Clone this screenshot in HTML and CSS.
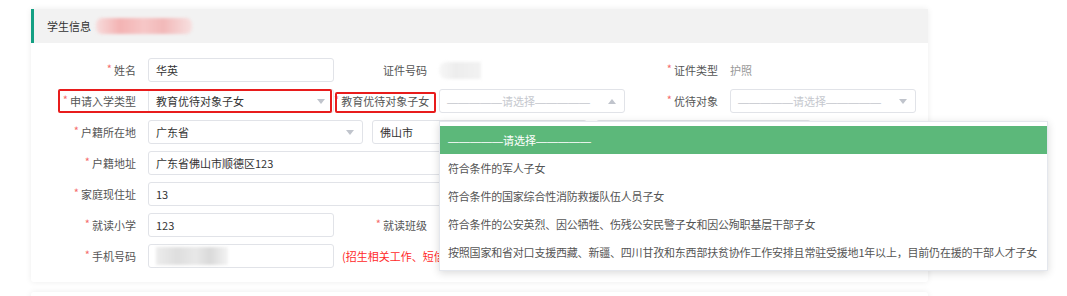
FILE: index.html
```html
<!DOCTYPE html>
<html lang="zh-CN">

<head>
  <meta charset="UTF-8" />
  <meta name="viewport" content="width=device-width, initial-scale=1" />
  <title>学生信息</title>
  <link rel="stylesheet" href="styles.css">
</head>

<body>

  <section class="card">
    <div class="card-head">学生信息<span class="mask mask-name"></span></div>

    <div class="form">
      <!-- 第一行 -->
      <div class="field">
        <label class="req">姓名</label>
        <div class="input">华英</div>
      </div>
      <div class="field">
        <label>证件号码</label>
        <div class="text"><span class="mask mask-id"></span></div>
      </div>
      <div class="field">
        <label class="req">证件类型</label>
        <div class="text muted">护照</div>
      </div>

      <!-- 第二行 -->
      <div class="field marked-field">
        <label class="req">申请入学类型</label>
        <div class="select">教育优待对象子女<i class="caret"></i></div>
      </div>
      <div class="field">
        <label class="req marked-label">教育优待对象子女</label>
        <div class="select placeholder">
          <span class="ph">—————请选择—————</span><i class="caret up"></i>
          <ul class="dropdown">
            <li class="selected"><span class="ph">—————请选择—————</span></li>
            <li>符合条件的军人子女</li>
            <li>符合条件的国家综合性消防救援队伍人员子女</li>
            <li>符合条件的公安英烈、因公牺牲、伤残公安民警子女和因公殉职基层干部子女</li>
            <li>按照国家和省对口支援西藏、新疆、四川甘孜和东西部扶贫协作工作安排且常驻受援地1年以上，目前仍在援的干部人才子女</li>
          </ul>
        </div>
      </div>
      <div class="field">
        <label class="req">优待对象</label>
        <div class="select placeholder"><span class="ph">—————请选择—————</span><i class="caret"></i></div>
      </div>

      <!-- 第三行 -->
      <div class="field wide">
        <label class="req">户籍所在地</label>
        <div class="region">
          <div class="select">广东省<i class="caret"></i></div>
          <div class="select">佛山市<i class="caret"></i></div>
          <div class="select"><i class="caret"></i></div>
        </div>
      </div>

      <div class="field wide">
        <label class="req">户籍地址</label>
        <div class="input long">广东省佛山市顺德区123</div>
      </div>

      <div class="field wide">
        <label class="req">家庭现住址</label>
        <div class="input long">13</div>
      </div>

      <div class="field">
        <label class="req">就读小学</label>
        <div class="input">123</div>
      </div>
      <div class="field">
        <label class="req">就读班级</label>
        <div class="input"></div>
      </div>
      <div class="field"></div>

      <div class="field wide">
        <label class="req">手机号码</label>
        <div class="input"><span class="mask mask-phone"></span></div>
        <span class="hint">(招生相关工作、短信</span>
      </div>
    </div>
  </section>

  <section class="card card-next"></section>

</body>

</html>
```

FILE: styles.css
```css
html,
body {
  margin: 0;
  padding: 0;
  background: #ffffff;
  font-family: "Noto Sans CJK SC", "Liberation Sans", sans-serif;
  font-size: 11px;
  color: #333;
  height: 100%;
  overflow: hidden;
}

.card {
  width: 897px;
  margin: 9px 0 0 31px;
  background: #fff;
  border-radius: 3px;
  box-shadow: 0 0 6px rgba(0, 0, 0, 0.08);
}

.card-next {
  height: 60px;
  margin-top: 10px;
}

.card-head {
  height: 34px;
  display: flex;
  align-items: center;
  background: #f2f2f2;
  border-left: 3px solid #14a083;
  padding-left: 13px;
  color: #333;
}

.mask {
  display: inline-block;
  filter: blur(1.5px);
}

.mask-name {
  width: 96px;
  height: 16px;
  margin-left: 5px;
  border-radius: 6px;
  background: linear-gradient(90deg, #f7dcdc 0%, #f3b3b3 25%, #f6c7c7 50%, #f2b9b9 70%, #f7e0e0 100%);
}

.mask-id {
  width: 42px;
  height: 17px;
  border-radius: 8px 0 0 8px;
  background: linear-gradient(90deg, #f7f7f7, #ededed 40%, #f2f2f2);
}

.mask-phone {
  width: 72px;
  height: 18px;
  margin-top: 2px;
  background: linear-gradient(90deg, #ececec 0%, #dedede 30%, #e8e8e8 55%, #d9d9d9 75%, #f4f4f4 100%);
}

.form {
  display: grid;
  grid-template-columns: repeat(3, 291px);
  row-gap: 7px;
  padding: 15px 0 14px 12px;
}

.field {
  display: flex;
  align-items: center;
  height: 24px;
  position: relative;
}

.field.wide {
  grid-column: 1 / 4;
}

.field label {
  width: 105px;
  flex: none;
  box-sizing: border-box;
  padding-right: 12px;
  text-align: right;
  color: #555;
  white-space: nowrap;
}

.field label.req::before {
  content: "*";
  color: #f56c6c;
  margin-right: 2px;
  position: relative;
  top: -2px;
}

.input,
.select {
  width: 186px;
  height: 24px;
  box-sizing: border-box;
  border: 1px solid #e1e3e8;
  border-radius: 3px;
  padding: 0 7px;
  line-height: 22px;
  color: #333;
  background: #fff;
  position: relative;
  white-space: nowrap;
}

.input.long {
  width: 664px;
}

.text {
  display: flex;
  align-items: center;
  height: 24px;
}

.muted {
  color: #999;
}

.region {
  display: flex;
  gap: 9px;
}

.region .select {
  width: 215px;
}

.caret {
  position: absolute;
  right: 8px;
  top: 9px;
  width: 0;
  height: 0;
  border-left: 4.5px solid transparent;
  border-right: 4.5px solid transparent;
  border-top: 5px solid #c0c4cc;
}

.caret.up {
  border-top: none;
  border-bottom: 5px solid #c0c4cc;
}

.ph {
  font-family: "Liberation Sans", "Noto Sans CJK SC", sans-serif;
  color: #c5c8ce;
}

.hint {
  margin-left: 8px;
  color: #ff2a2a;
  white-space: nowrap;
}

/* 红框标注 */
.marked-field::after {
  content: "";
  position: absolute;
  left: 15px;
  right: 2px;
  top: 0;
  bottom: 0;
  border: 2px solid #e81c1c;
  border-radius: 2px;
}

.marked-label {
  position: relative;
}

.marked-label::after {
  content: "";
  position: absolute;
  left: 1px;
  right: 3px;
  top: -1px;
  bottom: -4px;
  border: 2px solid #e81c1c;
  border-radius: 2px;
}

/* 下拉 */
.dropdown {
  position: absolute;
  left: -1px;
  top: 31px;
  width: 607px;
  margin: 0;
  padding: 4px 0;
  list-style: none;
  background: #fff;
  border: 1px solid #e4e7ed;
  box-shadow: 0 2px 8px rgba(0, 0, 0, 0.15);
  z-index: 10;
}

.dropdown li {
  height: 28px;
  line-height: 28px;
  padding-left: 8px;
  color: #555;
  letter-spacing: -0.2px;
}

.dropdown li.selected {
  background: #5cb87a;
  letter-spacing: 0;
}

.dropdown li.selected .ph {
  color: #fff;
}
```
